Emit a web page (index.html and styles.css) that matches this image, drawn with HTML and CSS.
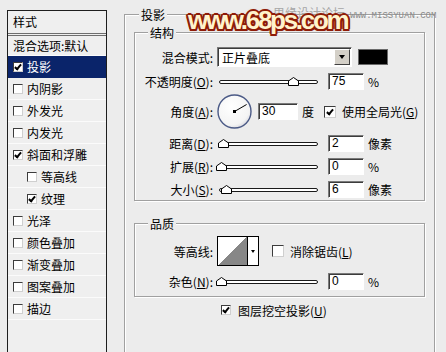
FILE: index.html
```html
<!DOCTYPE html>
<html lang="zh-CN">
<head>
    <meta charset="UTF-8">
    <title>图层样式 - 投影</title>
    <link rel="stylesheet" href="styles.css">
</head>
<body>
    <div class="dialog">
        <!-- 左侧样式列表 -->
        <div class="style-list">
            <div class="list-head">样式</div>
            <div class="list-item list-blend">混合选项:默认</div>
            <div class="list-item selected"><span class="cb on"></span>投影</div>
            <div class="list-item"><span class="cb"></span>内阴影</div>
            <div class="list-item"><span class="cb"></span>外发光</div>
            <div class="list-item"><span class="cb"></span>内发光</div>
            <div class="list-item"><span class="cb on"></span>斜面和浮雕</div>
            <div class="list-item sub"><span class="cb"></span>等高线</div>
            <div class="list-item sub"><span class="cb on"></span>纹理</div>
            <div class="list-item"><span class="cb"></span>光泽</div>
            <div class="list-item"><span class="cb"></span>颜色叠加</div>
            <div class="list-item"><span class="cb"></span>渐变叠加</div>
            <div class="list-item"><span class="cb"></span>图案叠加</div>
            <div class="list-item"><span class="cb"></span>描边</div>
        </div>

        <!-- 右侧参数 -->
        <div class="settings">
            <fieldset class="group outer">
                <legend>投影</legend>

                <fieldset class="group inner">
                    <legend>结构</legend>
                    <div class="row">
                        <span class="label">混合模式:</span>
                        <div class="select">
                            <span class="select-text">正片叠底</span>
                            <span class="drop-btn"></span>
                        </div>
                        <span class="swatch"></span>
                    </div>
                    <div class="row row-gap">
                        <span class="label">不透明度(<u>O</u>):</span>
                        <div class="slider"><div class="track"></div><svg class="thumb" style="left: 69px" viewBox="0 0 11 9"><polygon points="0.5,8.5 0.5,4 5.5,0.5 10.5,4 10.5,8.5" /></svg></div>
                        <span class="field">75</span>
                        <span class="unit">%</span>
                    </div>
                    <div class="row row-angle">
                        <span class="label">角度(<u>A</u>):</span>
                        <svg class="dial" width="35" height="35" viewBox="0 0 35 35">
                            <defs>
                                <radialGradient id="dialFill" cx="0.4" cy="0.35" r="0.7">
                                    <stop offset="0" stop-color="#ffffff" />
                                    <stop offset="0.8" stop-color="#f4f4f4" />
                                    <stop offset="1" stop-color="#d6d6de" />
                                </radialGradient>
                            </defs>
                            <circle cx="17.5" cy="17.5" r="16.5" fill="url(#dialFill)" stroke="#4b5a86" stroke-width="1.4" />
                            <line x1="17.5" y1="17.5" x2="29.6" y2="10.5" stroke="#000" stroke-width="1" />
                            <rect x="16" y="16" width="3" height="3" fill="#000" />
                        </svg>
                        <span class="field wide">30</span>
                        <span class="unit">度</span>
                        <span class="cb big on"></span>
                        <span class="check-label">使用全局光(<u>G</u>)</span>
                    </div>
                    <div class="row row-gap">
                        <span class="label">距离(<u>D</u>):</span>
                        <div class="slider"><div class="track"></div><svg class="thumb" style="left: -1px" viewBox="0 0 11 9"><polygon points="0.5,8.5 0.5,4 5.5,0.5 10.5,4 10.5,8.5" /></svg></div>
                        <span class="field">2</span>
                        <span class="unit">像素</span>
                    </div>
                    <div class="row">
                        <span class="label">扩展(<u>R</u>):</span>
                        <div class="slider"><div class="track"></div><svg class="thumb" style="left: -3px" viewBox="0 0 11 9"><polygon points="0.5,8.5 0.5,4 5.5,0.5 10.5,4 10.5,8.5" /></svg></div>
                        <span class="field">0</span>
                        <span class="unit">%</span>
                    </div>
                    <div class="row">
                        <span class="label">大小(<u>S</u>):</span>
                        <div class="slider"><div class="track"></div><svg class="thumb" style="left: 2px" viewBox="0 0 11 9"><polygon points="0.5,8.5 0.5,4 5.5,0.5 10.5,4 10.5,8.5" /></svg></div>
                        <span class="field">6</span>
                        <span class="unit">像素</span>
                    </div>
                </fieldset>

                <fieldset class="group inner quality">
                    <legend>品质</legend>
                    <div class="row row-contour">
                        <span class="label">等高线:</span>
                        <div class="contour">
                            <span class="contour-box"></span>
                            <span class="contour-drop"></span>
                        </div>
                        <span class="cb big aa"></span>
                        <span class="check-label">消除锯齿(<u>L</u>)</span>
                    </div>
                    <div class="row row-noise">
                        <span class="label">杂色(<u>N</u>):</span>
                        <div class="slider"><div class="track"></div><svg class="thumb" style="left: -3px" viewBox="0 0 11 9"><polygon points="0.5,8.5 0.5,4 5.5,0.5 10.5,4 10.5,8.5" /></svg></div>
                        <span class="field">0</span>
                        <span class="unit">%</span>
                    </div>
                </fieldset>

                <div class="knockout">
                    <span class="cb on"></span>
                    <span>图层挖空投影(<u>U</u>)</span>
                </div>
            </fieldset>
        </div>
    </div>

    <!-- 水印 -->
    <div class="site-cn">思缘设计论坛</div>
    <div class="site-en">WWW.MISSYUAN.COM</div>
    <div class="watermark">www.68ps.com</div>
</body>
</html>
```

FILE: styles.css
```css
body {
    margin: 0;
    width: 446px;
    height: 352px;
    overflow: hidden;
    position: relative;
    background: #ececec;
    font-family: "Noto Sans CJK SC", "Liberation Sans", sans-serif;
    font-size: 12px;
    color: #000;
}
u {
    text-decoration-thickness: 1px;
    text-underline-offset: 1px;
}
.dialog {
    display: flex;
    align-items: flex-start;
    padding: 7px 0 0 7px;
}

/* Список стилей слева */
.style-list {
    flex: none;
    width: 100px;
    height: 342px;
    margin-top: 3px;
    box-sizing: border-box;
    border: 1px solid #1e1e1e;
    border-bottom: none;
    background: #efefef;
}
.list-head {
    height: 22px;
    line-height: 22px;
    padding-left: 5px;
    border-bottom: 3px double #6e6e6e;
}
.list-item {
    display: flex;
    align-items: center;
    gap: 4px;
    height: 22px;
    box-sizing: border-box;
    padding-left: 5px;
    border-bottom: 1px solid #fbfbfb;
    white-space: nowrap;
}
.list-item.list-blend { height: 20px; }
.list-item.sub { padding-left: 19px; }
.list-item.selected {
    background: #0a246a;
    color: #fff;
    border-bottom-color: #0a246a;
}

/* Чекбоксы */
.cb {
    flex: none;
    position: relative;
    width: 10px;
    height: 10px;
    box-sizing: border-box;
    background: #fff;
    border: 1px solid;
    border-color: #3c3c3c #cfcfcf #cfcfcf #3c3c3c;
}
.cb.big {
    width: 12px;
    height: 12px;
}
.cb.on::after {
    content: "";
    position: absolute;
    left: 2px;
    top: 0;
    width: 2px;
    height: 5px;
    border: solid #000;
    border-width: 0 2px 2px 0;
    transform: rotate(40deg);
}
.cb.big.on::after {
    left: 3px;
    top: 1px;
}

/* Правая часть */
.settings {
    margin-left: 17px;
}
.group {
    margin: 0;
    padding: 0;
    min-width: 0;
    border: 1px solid #a0a0a0;
    box-shadow: inset 1px 1px 0 #fff, 1px 1px 0 #fff;
}
.group legend {
    padding: 0 2px;
    line-height: 15px;
    background: #ececec;
}
.outer {
    width: 311px;
    height: 345px;
    box-sizing: border-box;
    padding: 0 8px 0 9px;
    border-bottom: none;
}
.outer > legend { margin-left: 5px; }
.inner {
    width: 291px;
    box-sizing: border-box;
    margin-top: 3px;
    padding: 7px 0 1px;
}
.inner > legend { margin-left: 13px; }
.inner.quality {
    margin-top: 15px;
    padding: 5px 0 5px;
}

.row {
    display: flex;
    align-items: center;
    height: 20px;
    white-space: nowrap;
}
.row + .row { margin-top: 3px; }
.row + .row-gap { margin-top: 4px; }
.row-angle { height: 35px; }
.row-contour { height: 30px; }
.row + .row-noise { margin-top: 5px; }
.label {
    flex: none;
    width: 78px;
    margin-right: 4px;
    text-align: right;
}

/* Выпадающий список */
.select {
    flex: none;
    display: flex;
    align-items: center;
    width: 135px;
    height: 20px;
    box-sizing: border-box;
    padding: 0 1px 0 4px;
    background: #fff;
    border: 1px solid;
    border-color: #7a7a7a #fff #fff #7a7a7a;
    box-shadow: inset 1px 1px 0 #3c3c3c;
}
.select-text { flex: 1; }
.drop-btn {
    flex: none;
    display: flex;
    align-items: center;
    justify-content: center;
    width: 16px;
    height: 16px;
    box-sizing: border-box;
    background: #d4d0c8;
    border: 1px solid;
    border-color: #fff #404040 #404040 #fff;
}
.drop-btn::before {
    content: "";
    border-left: 3.5px solid transparent;
    border-right: 3.5px solid transparent;
    border-top: 4px solid #000;
}
.swatch {
    flex: none;
    width: 30px;
    height: 16px;
    margin-left: 6px;
    box-sizing: border-box;
    background: #000;
    border: 1px solid #6a6a6a;
}

/* Ползунки */
.slider {
    position: relative;
    flex: none;
    width: 99px;
    height: 20px;
    margin-left: 2px;
    padding-top: 9px;
    box-sizing: border-box;
}
.track {
    height: 4px;
    box-sizing: border-box;
    border: 1px solid #1a1a1a;
    border-radius: 2px;
    background: #fff;
}
.thumb {
    position: absolute;
    top: 6px;
    width: 11px;
    height: 9px;
}
.thumb polygon {
    fill: #fff;
    stroke: #000;
    stroke-width: 1;
}

/* Поля ввода */
.field {
    flex: none;
    width: 36px;
    height: 17px;
    margin-left: 10px;
    padding-left: 3px;
    box-sizing: border-box;
    line-height: 15px;
    background: #fff;
    border: 1px solid;
    border-color: #7a7a7a #fff #fff #7a7a7a;
    box-shadow: inset 1px 1px 0 #3c3c3c;
    font-family: "Liberation Sans", sans-serif;
    font-size: 12px;
}
.field.wide {
    width: 40px;
    margin-left: 6px;
}
.unit { margin-left: 4px; }
.dial { flex: none; }
.row-angle .cb { margin-left: 10px; }
.check-label { margin-left: 6px; }

/* Контур */
.contour {
    flex: none;
    display: flex;
    height: 30px;
}
.contour-box {
    width: 31px;
    height: 30px;
    box-sizing: border-box;
    border: 1px solid #000;
    background: linear-gradient(to top left, #878787 50%, #fff 50%);
}
.contour-drop {
    display: flex;
    align-items: center;
    justify-content: center;
    width: 11px;
    height: 30px;
    box-sizing: border-box;
    border: 1px solid #000;
    border-left: none;
    background: #fff;
}
.contour-drop::before {
    content: "";
    border-left: 2.5px solid transparent;
    border-right: 2.5px solid transparent;
    border-top: 3px solid #000;
}
.cb.aa { margin-left: 13px; }

.knockout {
    display: flex;
    align-items: center;
    gap: 7px;
    height: 16px;
    margin: 5px 0 0 87px;
}

/* Водяной знак */
.site-cn {
    position: absolute;
    left: 273px;
    top: 6px;
    font-size: 12px;
    line-height: 14px;
    color: #a6a6a6;
}
.site-en {
    position: absolute;
    left: 350px;
    top: 11px;
    font: 9px/10px "Liberation Mono", monospace;
    color: #8a8a8a;
}
.watermark {
    position: absolute;
    left: 188px;
    top: 5px;
    font: bold 26px/30px "Liberation Sans", sans-serif;
    letter-spacing: -2.3px;
    color: #fff3cc;
    text-shadow:
        2px 0 #8e1c08, -2px 0 #8e1c08, 0 2px #8e1c08, 0 -2px #8e1c08,
        1.5px 1.5px #8e1c08, -1.5px 1.5px #8e1c08,
        1.5px -1.5px #8e1c08, -1.5px -1.5px #8e1c08,
        0 0 3px #b02a10;
}
```
